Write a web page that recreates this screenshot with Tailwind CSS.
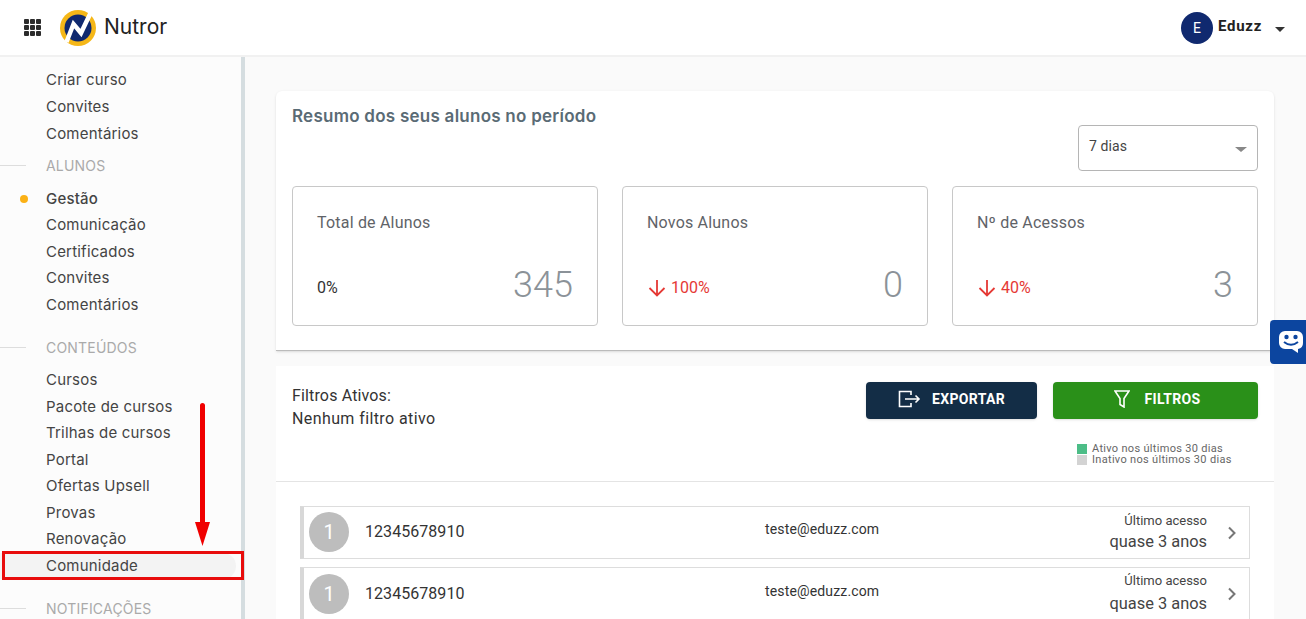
<!DOCTYPE html>
<html lang="pt-BR">
<head>
    <meta charset="UTF-8">
    <meta name="viewport" content="width=device-width, initial-scale=1.0">
    <title>Nutror</title>
    <script src="https://cdn.jsdelivr.net/npm/@tailwindcss/browser@4"></script>
</head>
<body class="h-[619px] overflow-hidden bg-[#fafafa] font-['Roboto',sans-serif] text-[#333]">
    <!-- Topo -->
    <header class="h-[57px] bg-white border-b-2 border-[#f1f1f1] flex items-center pl-6 pr-[21px]">
        <svg class="w-[17px] h-[17px] mr-[19px]" viewBox="0 0 17 17" fill="#2b2b2b">
            <rect x="0" y="0" width="5" height="5" rx="1"/><rect x="6" y="0" width="5" height="5" rx="1"/><rect x="12" y="0" width="5" height="5" rx="1"/>
            <rect x="0" y="6" width="5" height="5" rx="1"/><rect x="6" y="6" width="5" height="5" rx="1"/><rect x="12" y="6" width="5" height="5" rx="1"/>
            <rect x="0" y="12" width="5" height="5" rx="1"/><rect x="6" y="12" width="5" height="5" rx="1"/><rect x="12" y="12" width="5" height="5" rx="1"/>
        </svg>
        <svg class="w-9 h-9" viewBox="0 0 36 36">
            <circle cx="18" cy="18" r="18" fill="#f5b718"/>
            <circle cx="18" cy="18" r="13.5" fill="#10296f"/>
            <path d="M6.500 32 13.500 14 21 23 31 2" fill="none" stroke="#fff" stroke-width="4.500"/>
        </svg>
        <span class="ml-2 -mt-[2px] text-[21px] font-['Inter',sans-serif] text-[#222]">Nutror</span>
        <div class="ml-auto flex items-center">
            <span class="w-8 h-8 rounded-full bg-[#10296f] text-white text-sm flex items-center justify-center">E</span>
            <span class="ml-[5px] -mt-[2px] text-[15px] font-bold text-[#222] tracking-[0.7px]">Eduzz</span>
            <span class="ml-[13px] mt-1 w-0 h-0 border-x-[5px] border-x-transparent border-t-[5px] border-t-[#333]"></span>
        </div>
    </header>

    <div class="flex h-[562px]">
        <!-- Menu lateral -->
        <aside class="relative w-[245px] shrink-0 h-full overflow-hidden bg-[#fcfcfc] border-r-[4px] border-[#d5dde0] font-['Inter',sans-serif] text-[15px] text-[#444] tracking-[0.2px]">
            <ul class="pt-[9px]">
                <li class="h-[27px] pl-[46px] leading-[27px]">Criar curso</li>
                <li class="h-[27px] pl-[46px] leading-[27px]">Convites</li>
                <li class="h-[27px] pl-[46px] leading-[27px]">Comentários</li>
            </ul>
            <div class="mt-[5px] h-[27px] flex items-center text-sm text-[#aaa]"><span class="w-[26px] h-px bg-[#ddd] mr-5"></span>ALUNOS</div>
            <ul class="mt-[6px]">
                <li class="relative h-[27px] pl-[46px] leading-[27px] font-medium"><span class="absolute left-5 top-[10px] w-2 h-2 rounded-full bg-[#fbb116]"></span>Gestão</li>
                <li class="h-[26px] pl-[46px] leading-[26px]">Comunicação</li>
                <li class="h-[27px] pl-[46px] leading-[27px]">Certificados</li>
                <li class="h-[26px] pl-[46px] leading-[26px]">Convites</li>
                <li class="h-[27px] pl-[46px] leading-[27px]">Comentários</li>
            </ul>
            <div class="mt-[16px] h-[27px] flex items-center text-sm text-[#aaa]"><span class="w-[26px] h-px bg-[#ddd] mr-5"></span>CONTEÚDOS</div>
            <ul class="mt-[6px]">
                <li class="h-[26.5px] pl-[46px] leading-[26.5px]">Cursos</li>
                <li class="h-[26.5px] pl-[46px] leading-[26.5px]">Pacote de cursos</li>
                <li class="h-[26.5px] pl-[46px] leading-[26.5px]">Trilhas de cursos</li>
                <li class="h-[26.5px] pl-[46px] leading-[26.5px]">Portal</li>
                <li class="h-[26.5px] pl-[46px] leading-[26.5px]">Ofertas Upsell</li>
                <li class="h-[26.5px] pl-[46px] leading-[26.5px]">Provas</li>
                <li class="h-[26.5px] pl-[46px] leading-[26.5px]">Renovação</li>
                <li class="h-[26.5px] pl-[46px] leading-[26.5px] bg-[#f3f3f3] rounded-r-full mr-[5px]">Comunidade</li>
            </ul>
            <div class="mt-[16px] h-[27px] flex items-center text-sm text-[#aaa]"><span class="w-[26px] h-px bg-[#ddd] mr-5"></span>NOTIFICAÇÕES</div>
        </aside>

        <!-- Conteudo -->
        <main class="flex-1 h-full overflow-hidden pt-[34px] pl-[31px] pr-8">
            <section class="h-[260px] bg-white rounded-t-md border-b border-[#bbb] shadow-sm px-4 pt-[14px]">
                <div class="flex justify-between items-start">
                    <h2 class="font-['Inter',sans-serif] font-semibold text-[17px] leading-[23px] tracking-[0.25px] text-[#5a6b75]">Resumo dos seus alunos no período</h2>
                    <div class="mt-[20px] w-[180px] h-[46px] border border-[#b5b5b5] rounded flex items-start justify-between pt-[10px] px-[10px] text-sm tracking-[0.1px] text-[#444]">
                        7 dias
                        <span class="mt-[11px] w-0 h-0 border-x-[6px] border-x-transparent border-t-[5px] border-t-[#888]"></span>
                    </div>
                </div>
                <div class="mt-[15px] grid grid-cols-3 gap-6">
                    <div class="h-[140px] border border-[#c8c8c8] rounded px-6 pt-[26px] flex flex-col">
                        <p class="text-base leading-5 tracking-[0.2px] text-[#5f6368]">Total de Alunos</p>
                        <div class="mt-auto mb-[20px] flex items-center justify-between">
                            <span class="text-base mt-[5px] text-[#333]">0%</span>
                            <span class="text-[36px] leading-10 font-light text-[#8b9298]">345</span>
                        </div>
                    </div>
                    <div class="h-[140px] border border-[#c8c8c8] rounded px-6 pt-[26px] flex flex-col">
                        <p class="text-base leading-5 tracking-[0.2px] text-[#5f6368]">Novos Alunos</p>
                        <div class="mt-auto mb-[20px] flex items-center justify-between">
                            <span class="flex items-center text-base mt-[5px] text-[#e53935]">
                                <svg class="ml-[1px] w-[18px] h-[18px]" viewBox="0 0 18 18" fill="none" stroke="#e53935" stroke-width="1.800"><path d="M9 1v15.500M1.500 9 9 16.500 16.500 9"/></svg>
                                <span class="ml-[5px]">100%</span>
                            </span>
                            <span class="text-[36px] leading-10 font-light text-[#8b9298]">0</span>
                        </div>
                    </div>
                    <div class="h-[140px] border border-[#c8c8c8] rounded px-6 pt-[26px] flex flex-col">
                        <p class="text-base leading-5 tracking-[0.2px] text-[#5f6368]">Nº de Acessos</p>
                        <div class="mt-auto mb-[20px] flex items-center justify-between">
                            <span class="flex items-center text-base mt-[5px] text-[#e53935]">
                                <svg class="ml-[1px] w-[18px] h-[18px]" viewBox="0 0 18 18" fill="none" stroke="#e53935" stroke-width="1.800"><path d="M9 1v15.500M1.500 9 9 16.500 16.500 9"/></svg>
                                <span class="ml-[5px]">40%</span>
                            </span>
                            <span class="text-[36px] leading-10 font-light text-[#8b9298]">3</span>
                        </div>
                    </div>
                </div>
            </section>

            <section class="mt-[15px] bg-white">
                <div class="h-[116px] border-b border-[#e4e4e4] px-4 pt-[18px] flex justify-between">
                    <div class="text-base leading-[23px] text-[#333]">
                        <p class="tracking-[0.15px]">Filtros Ativos:</p>
                        <p class="tracking-[0.4px]">Nenhum filtro ativo</p>
                    </div>
                    <div class="-mt-[2px] flex flex-col items-end">
                        <div class="flex gap-4">
                            <button class="w-[171px] h-[37px] pb-1 bg-[#132d46] rounded shadow text-white text-sm font-bold tracking-wide flex items-center justify-center">
                                <svg class="w-[23px] h-[18px] mr-[11px]" viewBox="0 0 23 18" fill="none" stroke="#fff" stroke-width="1.600"><path d="M13 5V1.500H1.500v15H13V13M7 9h14M17.500 5.500 21 9l-3.500 3.500"/></svg>
                                EXPORTAR
                            </button>
                            <button class="w-[205px] h-[37px] pb-1 pl-1 bg-[#2a9019] rounded shadow text-white text-sm font-bold tracking-wide flex items-center justify-center">
                                <svg class="w-[16px] h-[18px] mr-[14px]" viewBox="0 0 16 18" fill="none" stroke="#fff" stroke-width="1.600"><path d="M1 1h14L10 8.500V17l-4-2.500V8.500Z"/></svg>
                                FILTROS
                            </button>
                        </div>
                        <div class="mt-6 mr-[26px] w-[155px] whitespace-nowrap text-[11px] leading-[11px] text-[#666] tracking-[0.31px]">
                            <p class="flex items-center"><span class="w-[10px] h-[10px] bg-[#4cbd87] mr-[5px]"></span>Ativo nos últimos 30 dias</p>
                            <p class="flex items-center"><span class="w-[10px] h-[10px] bg-[#d3d3d3] mr-[5px]"></span>Inativo nos últimos 30 dias</p>
                        </div>
                    </div>
                </div>

                <div class="px-6 pt-6 flex flex-col gap-2">
                    <div class="h-[53px] border border-[#ddd] border-l-4 border-l-[#d8d8d8] flex items-center pl-[5px] pr-[10px]">
                        <span class="-mt-[1px] w-10 h-10 rounded-full bg-[#bdbdbd] text-white text-xl flex items-center justify-center">1</span>
                        <span class="ml-4 -mt-[2px] w-[400px] text-base tracking-[0.05px] text-[#333]">12345678910</span>
                        <span class="-mt-[8px] text-sm tracking-[0.15px] text-[#333]">teste@eduzz.com</span>
                        <span class="ml-auto -mt-[1px] text-right">
                            <span class="block text-[13px] leading-4 text-[#444]">Último acesso</span>
                            <span class="block mt-[3px] text-[16.400px] leading-5 text-[#444]">quase 3 anos</span>
                        </span>
                        <svg class="ml-[18px] w-[14px] h-[14px]" viewBox="0 0 14 14" fill="none" stroke="#777" stroke-width="2"><path d="M4 1.500 9.500 7 4 12.500"/></svg>
                    </div>
                    <div class="h-[53px] border border-[#ddd] border-l-4 border-l-[#d8d8d8] flex items-center pl-[5px] pr-[10px]">
                        <span class="w-10 h-10 rounded-full bg-[#bdbdbd] text-white text-xl flex items-center justify-center">1</span>
                        <span class="ml-4 w-[400px] text-base tracking-[0.05px] text-[#333]">12345678910</span>
                        <span class="-mt-[6px] text-sm tracking-[0.15px] text-[#333]">teste@eduzz.com</span>
                        <span class="ml-auto text-right">
                            <span class="block -mt-[1px] text-[13px] leading-4 text-[#444]">Último acesso</span>
                            <span class="block mt-[5px] text-[16.400px] leading-5 text-[#444]">quase 3 anos</span>
                        </span>
                        <svg class="ml-[18px] w-[14px] h-[14px]" viewBox="0 0 14 14" fill="none" stroke="#777" stroke-width="2"><path d="M4 1.500 9.500 7 4 12.500"/></svg>
                    </div>
                </div>
            </section>
        </main>
    </div>

    <!-- Seta e destaque sobre o menu -->
    <div class="absolute left-[2px] top-[551px] w-[242px] h-[29px] border-[3px] border-[#e80c0c]"></div>
    <svg class="absolute left-[195px] top-[403px] w-[15px] h-[143px]" viewBox="0 0 15 143">
        <path d="M5 2.500a2.500 2.500 0 0 1 5 0V119H15L7.500 143 0 119H5Z" fill="#f00000"/>
    </svg>

    <!-- Widget de atendimento -->
    <div class="absolute left-[1270px] top-[320px] w-9 h-[44px] bg-[#0c459f] rounded-l flex items-center justify-center">
        <svg class="w-[26px] h-[26px] ml-[6px]" viewBox="0 0 26 26">
            <path d="M7 2h12a6 6 0 0 1 6 6v6a6 6 0 0 1-5 6v4l-6-4H7a6 6 0 0 1-6-6V8a6 6 0 0 1 6-6Z" fill="#fff"/>
            <circle cx="8.500" cy="8" r="2.200" fill="#0c459f"/><circle cx="17.500" cy="8" r="2.200" fill="#0c459f"/>
            <path d="M6 13q7 5.500 14 0" fill="none" stroke="#0c459f" stroke-width="2"/>
        </svg>
    </div>
</body>
</html>
